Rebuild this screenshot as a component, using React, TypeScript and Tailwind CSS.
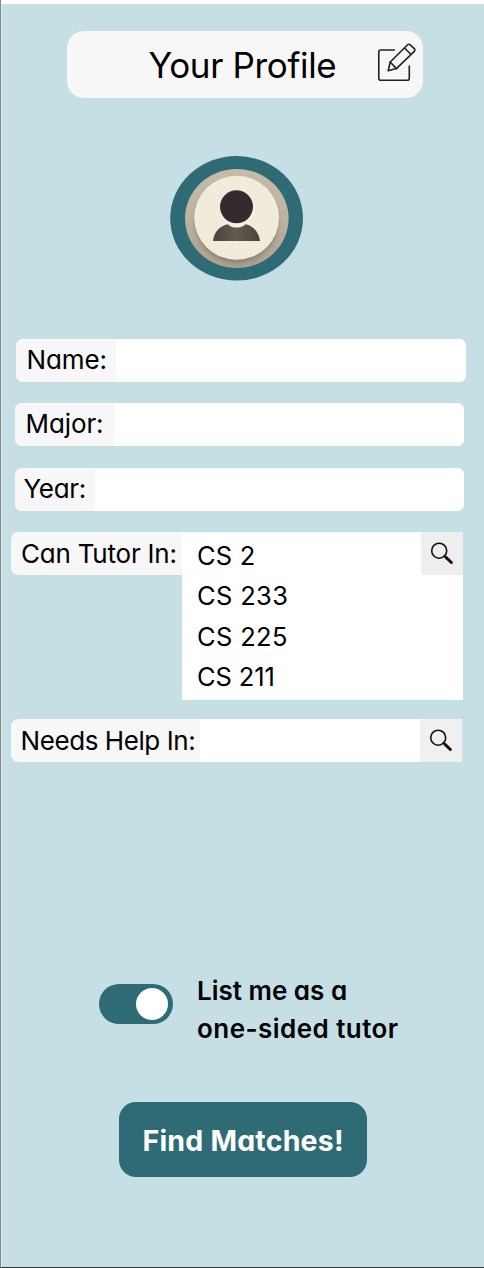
import { useState } from "react";

function EditIcon() {
  return (
    <svg className="block h-[42px] w-[42px]" viewBox="0 0 42 42" fill="none" stroke="#222" strokeWidth="1.6" strokeLinejoin="round" strokeLinecap="round">
      <path d="M18.3 8H4.8A2 2 0 0 0 2.8 10V36.3A2 2 0 0 0 4.8 38.3H31.3A2 2 0 0 0 33.3 36.3V24" />
      <path d="M12.2 28.8L14.2 20L31.6 2.8A1.8 1.8 0 0 1 34.2 2.8L38.3 6.7A1.8 1.8 0 0 1 38.3 9.3L20.4 26.6Z" />
      <path d="M14.2 20L20.4 26.6M28.8 6.3L35 12.5" />
    </svg>
  );
}

function SearchIcon() {
  return (
    <svg className="block h-[24px] w-[24px]" viewBox="0 0 24 24" fill="none" stroke="#111" strokeLinecap="round">
      <circle cx="9.2" cy="8.7" r="7.5" strokeWidth="1.6" />
      <path d="M14.4 14L16.2 15.6" strokeWidth="2" />
      <path d="M16 15.4L21.4 20.5" strokeWidth="3" />
    </svg>
  );
}

function Avatar() {
  return (
    <svg className="block h-[126px] w-[134px]" viewBox="0 0 134 126">
      <defs>
        <linearGradient id="ring" x1="0" y1="0" x2="0" y2="1">
          <stop offset="0" stopColor="#c4bba9" />
          <stop offset="0.5" stopColor="#bdb3a1" />
          <stop offset="1" stopColor="#aca090" />
        </linearGradient>
        <linearGradient id="body" x1="0" y1="0" x2="1" y2="0">
          <stop offset="0" stopColor="#4a423c" />
          <stop offset="0.5" stopColor="#655a4e" />
          <stop offset="1" stopColor="#4a423c" />
        </linearGradient>
        <filter id="soft" x="-20%" y="-20%" width="140%" height="140%">
          <feGaussianBlur stdDeviation="2.2" />
        </filter>
        <clipPath id="inside">
          <ellipse cx="66.8" cy="62.5" rx="51.8" ry="49.6" />
        </clipPath>
      </defs>
      <ellipse cx="66.6" cy="62.3" rx="66.4" ry="62.3" fill="#2f6b74" />
      <ellipse cx="66.8" cy="62.5" rx="51.8" ry="49.6" fill="url(#ring)" />
      <g clipPath="url(#inside)">
        <ellipse cx="66.5" cy="65.5" rx="41.5" ry="41.5" fill="#77695b" opacity="0.6" filter="url(#soft)" />
      </g>
      <ellipse cx="66.6" cy="61.8" rx="42.4" ry="42" fill="#f1ecda" />
      <ellipse cx="68.5" cy="53.5" rx="14.5" ry="14" fill="#fffdf5" filter="url(#soft)" />
      <circle cx="66.5" cy="50.8" r="16.5" fill="#332b2d" />
      <path d="M43 85C44 76 50 69.5 58 68.2C61 72.7 72 72.7 75.5 68.2C83 69.5 89 76 90 85Z" fill="url(#body)" />
    </svg>
  );
}

type FieldProps = { label: string; row: string; labelBox: string; text: string };

function Field({ label, row, labelBox, text }: FieldProps) {
  return (
    <label className={`flex h-[43px] overflow-hidden rounded-[7px] bg-white ${row}`}>
      <span className={`flex shrink-0 items-center bg-[#f7f7f7] ${labelBox}`}>
        <span className={`whitespace-nowrap text-[26px] leading-[40px] ${text}`}>{label}</span>
      </span>
      <input className="min-w-0 flex-1 bg-white px-3 text-[24px] outline-none" />
    </label>
  );
}

const courses = [
  { name: "CS 2", style: "tracking-[0.2px]" },
  { name: "CS 233", style: "tracking-[0.35px]" },
  { name: "CS 225", style: "tracking-[0.35px]" },
  { name: "CS 211", style: "tracking-[-0.1px]" },
];

export default function App() {
  const [listed, setListed] = useState(true);

  return (
    <main className="flex h-[1268px] w-[484px] flex-col overflow-hidden border-b border-l border-b-[#333] border-l-[#858585] bg-[#c6dfe4] font-['Inter','Liberation_Sans',sans-serif] text-black shadow-[inset_1px_0_0_#e0edf0] [font-feature-settings:'cv11']">
      <div className="h-[4px] shrink-0 bg-white" />
      <header className="mt-[27px] ml-[66px] flex h-[67px] w-[356px] shrink-0 items-center rounded-[17px] bg-[#f7f7f7]">
        <h1 className="ml-[81.5px] w-[190px] whitespace-nowrap text-[35px] leading-[44px] tracking-[-0.35px]">Your Profile</h1>
        <button className="mb-[3px] ml-[37.5px]" aria-label="Edit profile"><EditIcon /></button>
      </header>

      <div className="mt-[58px] ml-[169px] shrink-0"><Avatar /></div>

      <section className="mt-[56.5px] flex shrink-0 flex-col">
        <Field label="Name:" row="ml-[15px] w-[450px]" labelBox="w-[100px] pl-[10.5px] pb-[1px]" text="tracking-[-0.1px]" />
        <Field label="Major:" row="mt-[21.5px] ml-[14px] w-[449px]" labelBox="w-[99px] pl-[10.5px] pb-[2px]" text="tracking-[-0.1px]" />
        <Field label="Year:" row="mt-[21.5px] ml-[14px] w-[449px]" labelBox="w-[80px] pl-[8.5px] pb-[1px]" text="tracking-[-0.3px]" />

        <div className="mt-[21.5px] ml-[10px] flex h-[168px] w-[452px] items-start">
          <span className="flex h-[43px] w-[170.5px] shrink-0 items-center rounded-l-[7px] bg-[#f7f7f7] pl-[10px]">
            <span className="whitespace-nowrap text-[26px] leading-[40px] tracking-[-0.22px]">Can Tutor In:</span>
          </span>
          <div className="flex h-[168px] w-[281px] items-start justify-between bg-white">
            <ul className="pt-[4px] pl-[15.5px]">
              {courses.map((c) => (
                <li key={c.name} className={`h-[40.3px] whitespace-nowrap text-[25.5px] leading-[40px] ${c.style}`}>{c.name}</li>
              ))}
            </ul>
            <button className="flex h-[43px] w-[42px] items-center justify-center bg-[#eeeeee]" aria-label="Search courses to tutor"><SearchIcon /></button>
          </div>
        </div>

        <div className="mt-[19px] ml-[10px] flex h-[43px] w-[451px]">
          <span className="flex w-[189px] shrink-0 items-center rounded-l-[7px] bg-[#f7f7f7] pl-[9.5px]">
            <span className="whitespace-nowrap text-[26px] leading-[40px] tracking-[-0.42px]">Needs Help In:</span>
          </span>
          <input className="min-w-0 flex-1 bg-white px-3 text-[24px] outline-none" aria-label="Needs help in" />
          <button className="flex w-[42px] items-center justify-center bg-[#f0f0f0]" aria-label="Search courses for help"><SearchIcon /></button>
        </div>
      </section>

      <div className="mt-[210px] ml-[98px] flex shrink-0 items-start">
        <button
          role="switch"
          aria-checked={listed}
          aria-label="List me as a one-sided tutor"
          onClick={() => setListed(!listed)}
          className={`mt-[12px] flex h-[40px] w-[74px] items-center rounded-full bg-[#2f6b74] px-[5px] ${listed ? "justify-end" : "justify-start"}`}
        >
          <span className="h-[32px] w-[32px] rounded-full bg-white" />
        </button>
        <p className="ml-[24px] whitespace-nowrap text-[26px] leading-[38px] font-semibold">
          <span className="block">List me as a</span>
          <span className="block tracking-[0.45px]">one-sided tutor</span>
        </p>
      </div>

      <button className="mt-[54px] ml-[117.5px] flex h-[75px] w-[248.5px] shrink-0 items-center rounded-[17px] bg-[#2f6b74] pl-[24px] text-white">
        <span className="whitespace-nowrap pt-[2px] text-[28.5px] leading-[40px] font-bold tracking-[0.2px]">Find Matches!</span>
      </button>
    </main>
  );
}
